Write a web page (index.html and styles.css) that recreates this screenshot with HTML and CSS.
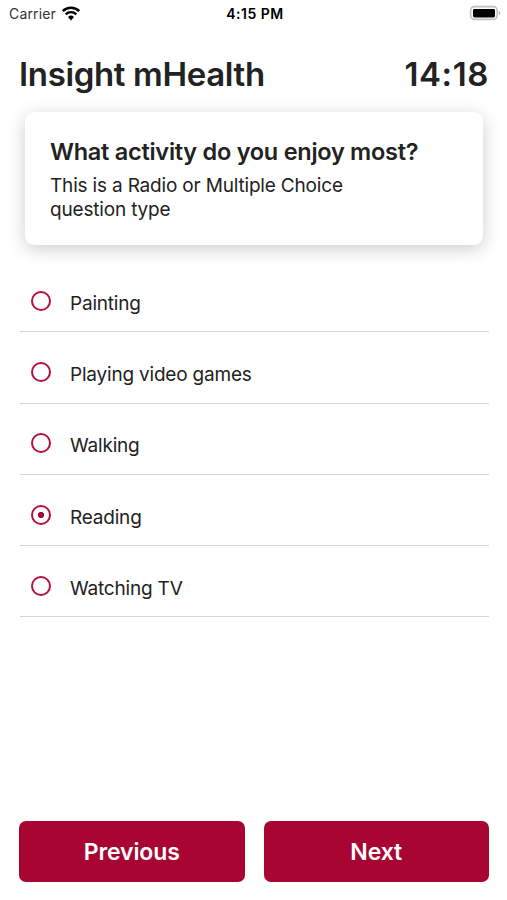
FILE: index.html
```
<!DOCTYPE html>
<html lang="en">
<head>
  <meta charset="UTF-8">
  <meta name="viewport" content="width=device-width,initial-scale=1">
  <title>Insight mHealth</title>
  <link rel="stylesheet" href="styles.css">
</head>
<body>
  <div class="app">
    <!-- Status bar -->
    <div class="status-bar">
      <div class="carrier">
        <span>Carrier</span>
        <svg class="wifi" width="20" height="16" viewBox="0 0 20 16">
          <path d="M1.8 6.1a11.8 11.8 0 0 1 16.4 0" fill="none" stroke="#000" stroke-width="2.6"/>
          <path d="M4.7 9.3a7.6 7.6 0 0 1 10.6 0" fill="none" stroke="#000" stroke-width="2.4"/>
          <path d="M10 15.4l-3-3.4a4.3 4.3 0 0 1 6 0z"/>
        </svg>
      </div>
      <span class="clock">4:15 PM</span>
      <svg class="battery" width="32" height="16" viewBox="0 0 32 16">
        <rect x="1.6" y="1.6" width="26.6" height="12.8" rx="3.8" fill="#fff" stroke="#c0c0c0" stroke-width="1.6"/>
        <rect x="4" y="3.9" width="22" height="8.6" rx="1.4"/>
        <path d="M29.8 5.9c1.9.6 1.9 3.6 0 4.2z" fill="#b8b8b8"/>
      </svg>
    </div>

    <header>
      <h1>Insight mHealth</h1>
      <span class="timer">14:18</span>
    </header>

    <main>
      <div class="card">
        <h2>What activity do you enjoy most?</h2>
        <p>This is a Radio or Multiple Choice<br>question type</p>
      </div>

      <!-- Answers -->
      <div class="options">
        <label class="option"><input type="radio" name="activity"><span>Painting</span></label>
        <label class="option"><input type="radio" name="activity"><span>Playing video games</span></label>
        <label class="option"><input type="radio" name="activity"><span>Walking</span></label>
        <label class="option"><input type="radio" name="activity" checked><span>Reading</span></label>
        <label class="option"><input type="radio" name="activity"><span>Watching TV</span></label>
      </div>
    </main>

    <footer>
      <button type="button">Previous</button>
      <button type="button">Next</button>
    </footer>
  </div>
</body>
</html>
```
FILE: styles.css
```
* { box-sizing: border-box; }
body { background: #fff; color: #222; font-family: Inter, "Liberation Sans", sans-serif; margin: 0; }
.app { display: flex; flex-direction: column; height: 900px; overflow: hidden; }

.status-bar {
  display: grid;
  grid-template-columns: 1fr auto 1fr;
  align-items: center;
  height: 27px;
  padding: 0 6px 0 9px;
  color: #000;
  font-size: 14px;
}
.carrier { display: flex; align-items: center; gap: 5px; color: #333; letter-spacing: 0.15px; }
.wifi { margin-top: -2px; }
.clock { font-weight: 600; letter-spacing: 0.5px; }
.battery { justify-self: end; margin-top: -1px; }

header { display: flex; justify-content: space-between; align-items: center; height: 84px; padding: 10px 18px 0 19px; }
h1, .timer { margin: 0; font-size: 33px; font-weight: 600; line-height: 40px; }
h1 { letter-spacing: -0.35px; }
.timer { letter-spacing: 0.6px; }

.card {
  height: 133px;
  margin: 1px 24px 0 25px;
  padding: 25px 25px 0;
  border-radius: 9px;
  background: #fff;
  box-shadow: 0 4px 18px rgba(0,0,0,0.2);
}
h2 { margin: 0; font-size: 23.5px; font-weight: 600; line-height: 29px; letter-spacing: -0.26px; }
p { margin: 8px 0 0; font-size: 19px; line-height: 23.5px; letter-spacing: -0.18px; }

.options { margin: 16px 18px 0 20px; }
.option {
  display: flex;
  align-items: center;
  height: 71.3px;
  padding: 14px 11px 0;
  border-bottom: 1.5px solid #d6d6d6;
  font-size: 19px;
  letter-spacing: -0.2px;
}
.option input {
  appearance: none;
  width: 20px;
  height: 20px;
  margin: -5px 19px 0 0;
  border: 2px solid #b3123f;
  border-radius: 50%;
}
.option input:checked { background: radial-gradient(circle, #a90533 2.8px, transparent 3.5px); }

footer { display: flex; gap: 19px; margin-top: auto; padding: 0 18px 18px 19px; }
button {
  flex: 1;
  height: 61px;
  border: none;
  border-radius: 7px;
  background: #a90533;
  color: #fff;
  font: 600 23px Inter, "Liberation Sans", sans-serif;
  letter-spacing: -0.1px;
}
```
